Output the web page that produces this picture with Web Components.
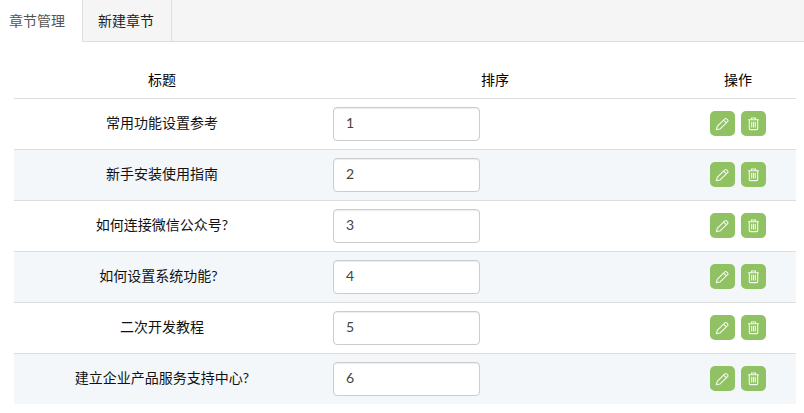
<!DOCTYPE html>
<html lang="zh">
<head>
<meta charset="utf-8">
<title>章节管理</title>
<style>
  html, body { margin: 0; background: #fff; }
  body { font: 14px/20px Lato, "Noto Sans CJK SC", sans-serif; color: #222; overflow: hidden; }
</style>
</head>
<body>
<chapter-tabs>
  <tab-item active>章节管理</tab-item>
  <tab-item>新建章节</tab-item>
</chapter-tabs>
<chapter-table>
  <chapter-row slot="row" name="常用功能设置参考" order="1"></chapter-row>
  <chapter-row slot="row" name="新手安装使用指南" order="2" striped></chapter-row>
  <chapter-row slot="row" name="如何连接微信公众号?" order="3"></chapter-row>
  <chapter-row slot="row" name="如何设置系统功能?&nbsp;&nbsp;" order="4" striped></chapter-row>
  <chapter-row slot="row" name="二次开发教程" order="5"></chapter-row>
  <chapter-row slot="row" name="建立企业产品服务支持中心?" order="6" striped></chapter-row>
</chapter-table>
<script>
class ChapterTabs extends HTMLElement {
    constructor() {
        super();
        const shadowRoot = this.attachShadow({ mode: 'open' });
        shadowRoot.innerHTML = `
        <style>
            :host {
                display: flex;
                height: 41px;
                background: #f5f5f5;
                border-bottom: 1px solid #ddd;
            }
        </style>
        <slot></slot>
        `;
    }
}
customElements.define('chapter-tabs', ChapterTabs);

class TabItem extends HTMLElement {
    constructor() {
        super();
        const shadowRoot = this.attachShadow({ mode: 'open' });
        shadowRoot.innerHTML = `
        <style>
            :host {
                display: block;
                width: 89px;
                height: 41px;
                box-sizing: border-box;
                padding: 0 0 0 15px;
                line-height: 41px;
                font-size: 14px;
                color: #222;
                border-right: 1px solid #ddd;
            }
            :host([active]) {
                width: 83px;
                height: 42px;
                padding-left: 9px;
                background: #fff;
                color: #555;
            }
        </style>
        <slot></slot>
        `;
    }
}
customElements.define('tab-item', TabItem);

class ChapterTable extends HTMLElement {
    constructor() {
        super();
        const shadowRoot = this.attachShadow({ mode: 'open' });
        shadowRoot.innerHTML = `
        <style>
            :host {
                display: block;
                margin: 0 8px 0 14px;
                padding-top: 14px;
            }
            .head {
                display: grid;
                grid-template-columns: 296px 370px 116px;
                height: 42px;
                line-height: 48px;
                text-align: center;
                font-size: 14px;
                color: #000;
                border-bottom: 1px solid #ddd;
            }
        </style>
        <div class="head">
            <span>标题</span>
            <span>排序</span>
            <span>操作</span>
        </div>
        <slot name="row"></slot>
        `;
    }
}
customElements.define('chapter-table', ChapterTable);

class ChapterRow extends HTMLElement {
    constructor() {
        super();
        const shadowRoot = this.attachShadow({ mode: 'open' });
        const name = this.getAttribute('name');
        const order = this.getAttribute('order');
        shadowRoot.innerHTML = `
        <style>
            :host {
                display: grid;
                grid-template-columns: 296px 370px 116px;
                align-items: center;
                height: 50px;
                border-bottom: 1px solid #ddd;
                font-size: 14px;
                color: #111;
            }
            :host([striped]) { background: #f4f7fa; }
            :host(:last-child) { border-bottom: 0; }
            .name { text-align: center; padding-bottom: 3px; white-space: pre; }
            .order { padding-left: 23px; }
            input {
                display: block;
                box-sizing: border-box;
                width: 147px;
                height: 34px;
                padding: 0 12px 3px;
                border: 1px solid #ccc;
                border-radius: 4px;
                background: #fff;
                font: 14px Lato, sans-serif;
                color: #444;
                box-shadow: inset 0 1px 1px rgba(0, 0, 0, 0.075);
            }
            .actions { display: flex; justify-content: center; gap: 6px; padding-bottom: 1px; }
        </style>
        <div class="name">${name}</div>
        <div class="order"><input type="text" value="${order}"></div>
        <div class="actions">
            <icon-button type="edit"></icon-button>
            <icon-button type="trash"></icon-button>
        </div>
        `;
    }
}
customElements.define('chapter-row', ChapterRow);

const ICONS = {
    edit: '<path d="M2.4 14.6 L3.3 11.4 L10.8 3.9 a1.2 1.2 0 0 1 1.8 0 l1 1 a1.2 1.2 0 0 1 0 1.8 L6 14 Z M9.6 5.1 L12.4 7.9" />',
    trash: '<path d="M3 4.7 H14 M6.5 4.7 V3 H10.5 V4.7 M4.3 4.7 V13.6 a1 1 0 0 0 1 1 H11.7 a1 1 0 0 0 1 -1 V4.7 M6.7 6.8 V12.5 M8.5 6.8 V12.5 M10.3 6.8 V12.5" />'
};

class IconButton extends HTMLElement {
    constructor() {
        super();
        const shadowRoot = this.attachShadow({ mode: 'open' });
        const type = this.getAttribute('type');
        shadowRoot.innerHTML = `
        <style>
            :host {
                display: flex;
                align-items: center;
                justify-content: center;
                width: 25px;
                height: 25px;
                border-radius: 5px;
                background: #90c263;
            }
            svg { width: 17px; height: 18px; fill: none; stroke: #fff; stroke-width: 1.1; opacity: .9; }
        </style>
        <svg viewBox="0 0 17 18">${ICONS[type]}</svg>
        `;
    }
}
customElements.define('icon-button', IconButton);
</script>
</body>
</html>
